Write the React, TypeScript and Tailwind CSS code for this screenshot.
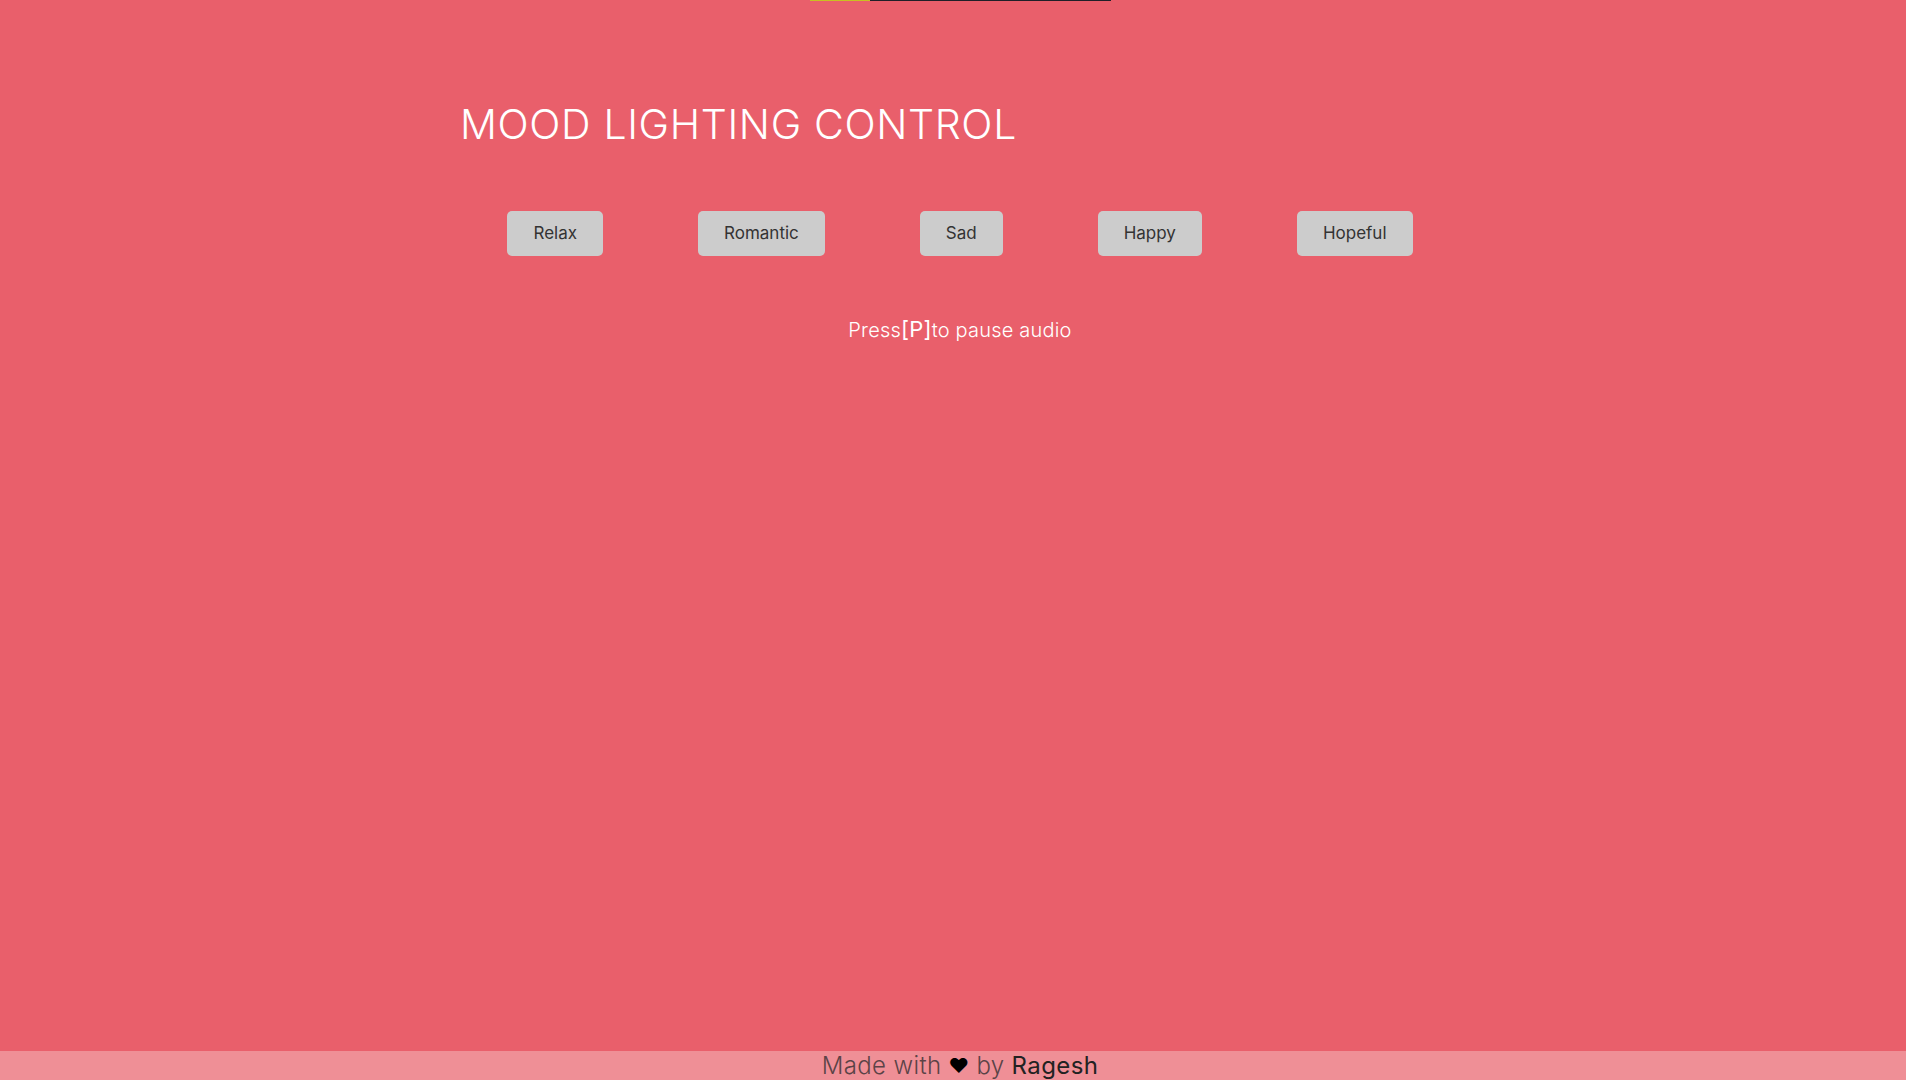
const moods = ['Relax', 'Romantic', 'Sad', 'Happy', 'Hopeful'];

export default function App() {
  return (
    <div className="flex min-h-screen flex-col bg-[#e95f6b] font-['Inter',sans-serif] text-white">
      {/* audio progress strip */}
      <div className="flex justify-center pl-[14px]">
        <div className="flex h-px w-[301px]">
          <div className="w-[60px] bg-[#c9c021]" />
          <div className="flex-1 bg-[#1f1f28]" />
        </div>
      </div>

      <main className="mx-auto w-[1000px]">
        <h1 className="ml-[7px] mt-[103px] text-[41px] font-light leading-[40px] tracking-[0.65px]">
          MOOD LIGHTING CONTROL
        </h1>

        <div className="mt-[67px] flex justify-center gap-[95px] pl-[14px]">
          {moods.map((m) => (
            <button
              key={m}
              className="h-[45px] rounded-[5px] bg-[#cccccc] px-[26px] text-[17px] font-normal text-[#333333]"
            >
              {m}
            </button>
          ))}
        </div>

        <p className="mt-[57px] pl-[14px] text-center text-[20px] font-light tracking-[0.2px]">
          Press<span className="text-[22px] font-normal">[P]</span>to pause audio
        </p>
      </main>

      <footer className="mt-auto flex h-[29px] items-center justify-center bg-[#ef8f96] pl-[14px] text-[24px] font-light leading-none tracking-[0.4px]">
        <span className="text-[#5b4347]">Made with</span>
        <span className="mx-[7px] text-[20px] text-black">♥</span>
        <span className="text-[#5b4347]">by</span>
        <span className="ml-[7px] font-normal text-[#222222]">Ragesh</span>
      </footer>
    </div>
  );
}
